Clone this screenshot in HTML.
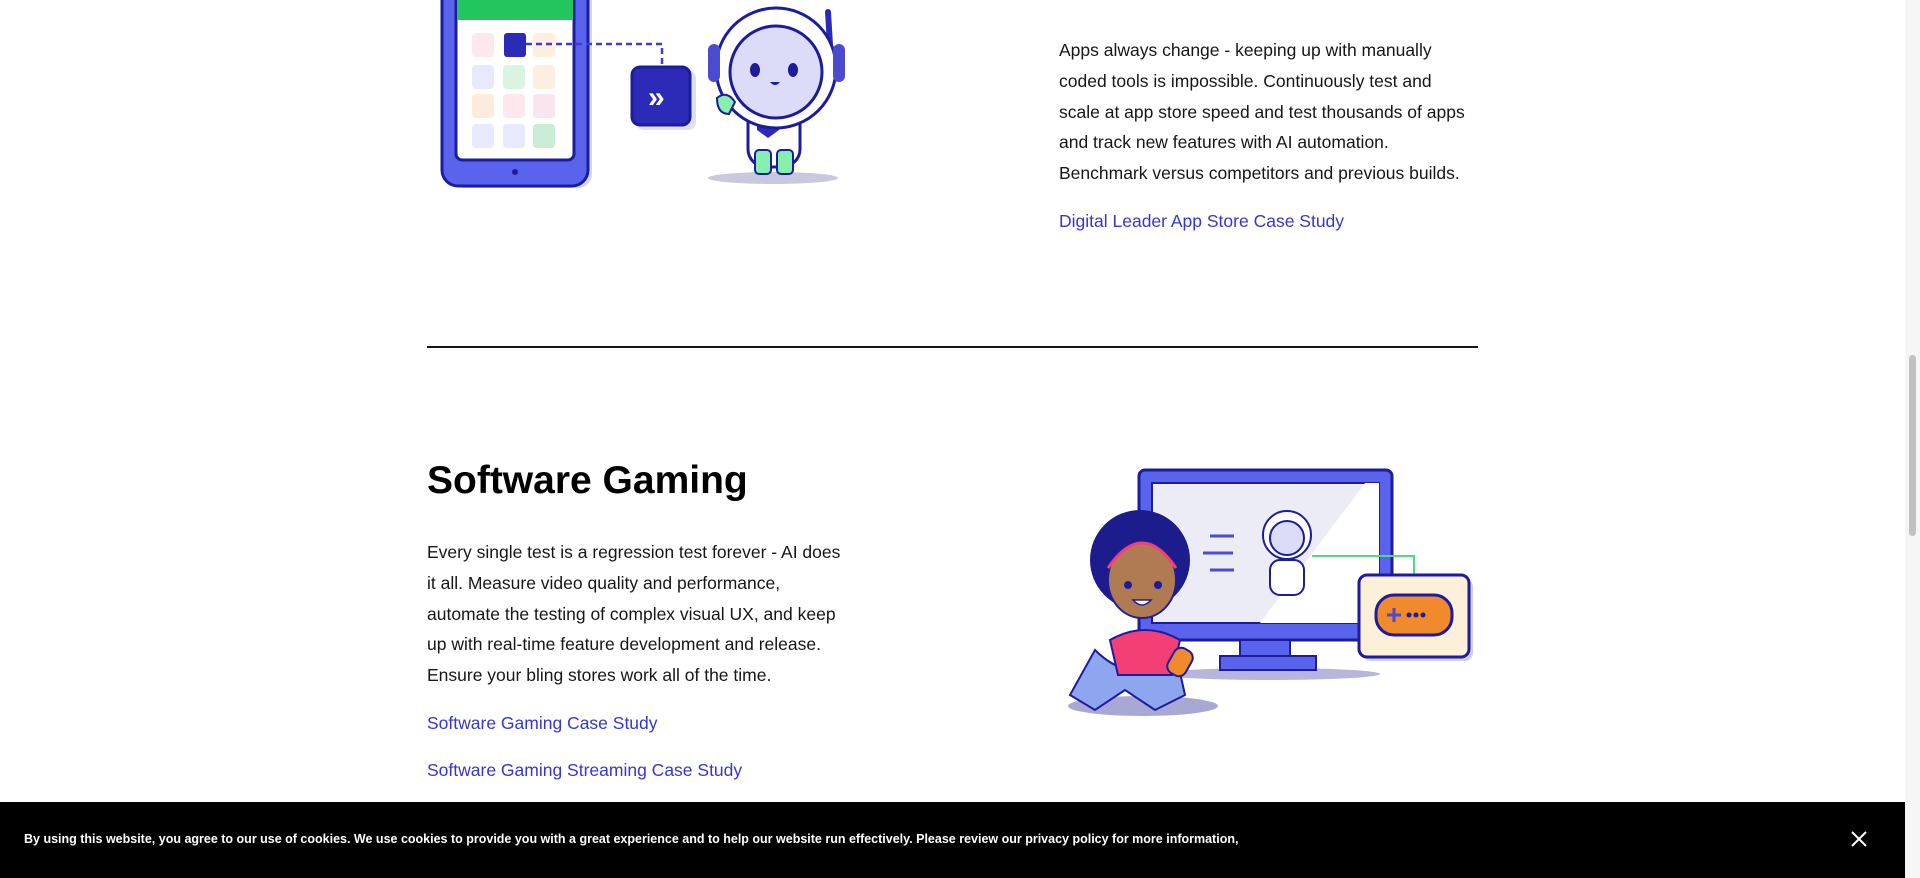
<!DOCTYPE html>
<html><head><meta charset="utf-8"><style>
*{margin:0;padding:0;box-sizing:border-box}
body{width:1920px;height:878px;overflow:hidden;background:#fff;font-family:"Liberation Sans",sans-serif;position:relative;color:#161616}
.p{position:absolute;font-size:17.5px;line-height:30.8px;color:#161616;white-space:nowrap}
.lnk{position:absolute;font-size:17.5px;color:#3535d8}
</style></head><body>
<svg style="position:absolute;left:0;top:0" width="1920" height="878">
<rect x="450" y="-30" width="142" height="218" rx="14" fill="#d6d6e6"/>
<rect x="442" y="-30" width="146" height="216" rx="16" fill="#5a63ec" stroke="#1c1c9c" stroke-width="3"/>
<rect x="456" y="-20" width="118" height="180" rx="6" fill="#fff" stroke="#1c1c9c" stroke-width="3"/>
<rect x="457" y="0" width="116" height="20" fill="#22c55e"/>
<g opacity="0.7">
<rect x="472" y="33" width="22" height="24" rx="4" fill="#fde0e6"/><rect x="533" y="33" width="22" height="24" rx="4" fill="#fde8d2"/>
<rect x="472" y="65" width="22" height="24" rx="4" fill="#dfe1fb"/><rect x="503" y="65" width="22" height="24" rx="4" fill="#c9f2d6"/><rect x="533" y="65" width="22" height="24" rx="4" fill="#fde8d2"/>
<rect x="472" y="94" width="22" height="24" rx="4" fill="#fde3d0"/><rect x="503" y="94" width="22" height="24" rx="4" fill="#fde0e6"/><rect x="533" y="94" width="22" height="24" rx="4" fill="#f6dbe6"/>
<rect x="472" y="124" width="22" height="24" rx="4" fill="#dfe1fb"/><rect x="503" y="124" width="22" height="24" rx="4" fill="#dfe1fb"/><rect x="533" y="124" width="22" height="24" rx="4" fill="#b6e6c8"/>
</g>
<circle cx="515" cy="172" r="3" fill="#1c1c9c"/>
<rect x="504" y="33" width="22" height="24" rx="3" fill="#2b2bb8"/>
<path d="M526 44 H662 V68" stroke="#3c3cdc" stroke-width="2.5" stroke-dasharray="6 4" fill="none"/>
<rect x="636" y="70" width="60" height="60" rx="8" fill="#ccd" opacity=".6"/>
<rect x="632" y="67" width="58" height="58" rx="8" fill="#2b2bb8" stroke="#1c1c9c" stroke-width="3"/>
<text x="648" y="107" fill="#fff" font-size="30" font-weight="bold" font-family="Liberation Sans">»</text>
<ellipse cx="773" cy="178" rx="65" ry="6" fill="#c9c9dd"/>
<path d="M828 12 L830 45" stroke="#2b2bb8" stroke-width="6" stroke-linecap="round"/>
<rect x="748" y="105" width="52" height="62" rx="18" fill="#fff" stroke="#1c1c9c" stroke-width="3"/>
<rect x="755" y="150" width="16" height="24" rx="4" fill="#86efac" stroke="#1c1c9c" stroke-width="2"/><rect x="777" y="150" width="16" height="24" rx="4" fill="#86efac" stroke="#1c1c9c" stroke-width="2"/>
<path d="M757 112 h22 v18 l-11 8 l-11 -8z" fill="#2b2bb8"/>
<circle cx="776" cy="68" r="60" fill="#fff" stroke="#1c1c9c" stroke-width="3"/>
<circle cx="776" cy="72" r="46" fill="#dcdcf8" stroke="#1c1c9c" stroke-width="3"/>
<rect x="708" y="44" width="12" height="38" rx="6" fill="#4b4bd0"/><rect x="833" y="44" width="12" height="38" rx="6" fill="#4b4bd0"/>
<ellipse cx="755" cy="70" rx="5" ry="7" fill="#1c1c9c"/><ellipse cx="793" cy="70" rx="5" ry="7" fill="#1c1c9c"/>
<path d="M770 82 q5 6 10 0z" fill="#1c1c9c"/>
<path d="M717 98 q10 -8 18 4 l-6 12 q-12 0 -12 -16z" fill="#86efac" stroke="#1c1c9c" stroke-width="2"/>
<ellipse cx="1270" cy="674" rx="110" ry="6" fill="#b6b6dc"/>
<rect x="1139" y="470" width="253" height="170" rx="6" fill="#5a63ec" stroke="#1c1c9c" stroke-width="3"/>
<rect x="1152" y="483" width="227" height="140" fill="#ececf6" stroke="#1c1c9c" stroke-width="2"/>
<path d="M1260 623 L1365 483 H1379 V623Z" fill="#fff"/>
<rect x="1240" y="640" width="50" height="18" fill="#5a63ec" stroke="#1c1c9c" stroke-width="2"/>
<rect x="1220" y="656" width="96" height="14" fill="#5a63ec" stroke="#1c1c9c" stroke-width="2"/>
<path d="M1210 536 h24 M1203 553 h30 M1210 570 h24" stroke="#4b4bd0" stroke-width="3"/>
<circle cx="1287" cy="535" r="24" fill="#fff" stroke="#1c1c9c" stroke-width="2"/>
<circle cx="1287" cy="538" r="17" fill="#dcdcf8" stroke="#1c1c9c" stroke-width="2"/>
<rect x="1270" y="560" width="34" height="35" rx="10" fill="#fff" stroke="#1c1c9c" stroke-width="2"/>
<path d="M1312 556 H1414 V600" stroke="#4ade80" stroke-width="2" fill="none"/>
<rect x="1363" y="579" width="110" height="82" rx="8" fill="#cfcfe6"/>
<rect x="1359" y="575" width="110" height="82" rx="8" fill="#fdf0d8" stroke="#1c1c9c" stroke-width="3"/>
<rect x="1376" y="595" width="76" height="40" rx="18" fill="#f08a2c" stroke="#1c1c9c" stroke-width="3"/>
<path d="M1387 615 h14 M1394 608 v14" stroke="#4b4bd0" stroke-width="3"/>
<circle cx="1409" cy="615" r="2.5" fill="#1c1c9c"/><circle cx="1416" cy="615" r="2.5" fill="#1c1c9c"/><circle cx="1423" cy="615" r="2.5" fill="#1c1c9c"/>
<ellipse cx="1143" cy="706" rx="75" ry="10" fill="#a8a8d4"/>
<path d="M1095 650 q40 40 80 0 l10 45 l-30 15 l-30 -20 l-30 20 l-25 -15z" fill="#8ea6f0" stroke="#1c1c9c" stroke-width="2"/>
<path d="M1110 640 q35 -20 70 0 l-8 35 h-54z" fill="#f43f74" stroke="#1c1c9c" stroke-width="2"/>
<circle cx="1140" cy="560" r="50" fill="#1c1c8c"/>
<ellipse cx="1142" cy="580" rx="34" ry="38" fill="#b07a52" stroke="#1c1c9c" stroke-width="2"/>
<path d="M1108 568 q34 -50 68 0" stroke="#f43f74" stroke-width="3" fill="none"/>
<circle cx="1128" cy="585" r="4" fill="#1c1c9c"/><circle cx="1158" cy="585" r="4" fill="#1c1c9c"/>
<path d="M1133 600 q9 10 18 0z" fill="#fff" stroke="#1c1c9c" stroke-width="1.5"/>
<rect x="1170" y="648" width="20" height="28" rx="8" fill="#f08a2c" stroke="#1c1c9c" stroke-width="2" transform="rotate(30 1180 662)"/>
<rect x="1905" y="0" width="15" height="878" fill="#f5f5f5"/>
<rect x="1909" y="355" width="7" height="181" rx="3.5" fill="#c1c1c1"/>
</svg>
<div class="p" style="left:1059px;top:35px">Apps always change - keeping up with manually<br>coded tools is impossible. Continuously test and<br>scale at app store speed and test thousands of apps<br>and track new features with AI automation.<br>Benchmark versus competitors and previous builds.</div>
<div class="lnk" style="left:1059px;top:211px">Digital Leader App Store Case Study</div>
<div style="position:absolute;left:427px;top:346px;width:1051px;height:1.5px;background:#161616"></div>
<div style="position:absolute;left:427px;top:459px;font-size:39px;font-weight:bold;color:#000">Software Gaming</div>
<div class="p" style="left:427px;top:537px">Every single test is a regression test forever - AI does<br>it all. Measure video quality and performance,<br>automate the testing of complex visual UX, and keep<br>up with real-time feature development and release.<br>Ensure your bling stores work all of the time.</div>
<div class="lnk" style="left:427px;top:713px">Software Gaming Case Study</div>
<div class="lnk" style="left:427px;top:760px">Software Gaming Streaming Case Study</div>
<div style="position:absolute;left:0;top:802px;width:1905px;height:76px;background:#000"></div>
<div style="position:absolute;left:24px;top:832px;font-size:12.5px;font-weight:bold;color:#fff;white-space:nowrap">By using this website, you agree to our use of cookies. We use cookies to provide you with a great experience and to help our website run effectively. Please review our privacy policy for more information,</div>
<svg style="position:absolute;left:1851px;top:831px" width="16" height="16"><path d="M1 1L15 15M15 1L1 15" stroke="#fff" stroke-width="2"/></svg>
</body></html>
